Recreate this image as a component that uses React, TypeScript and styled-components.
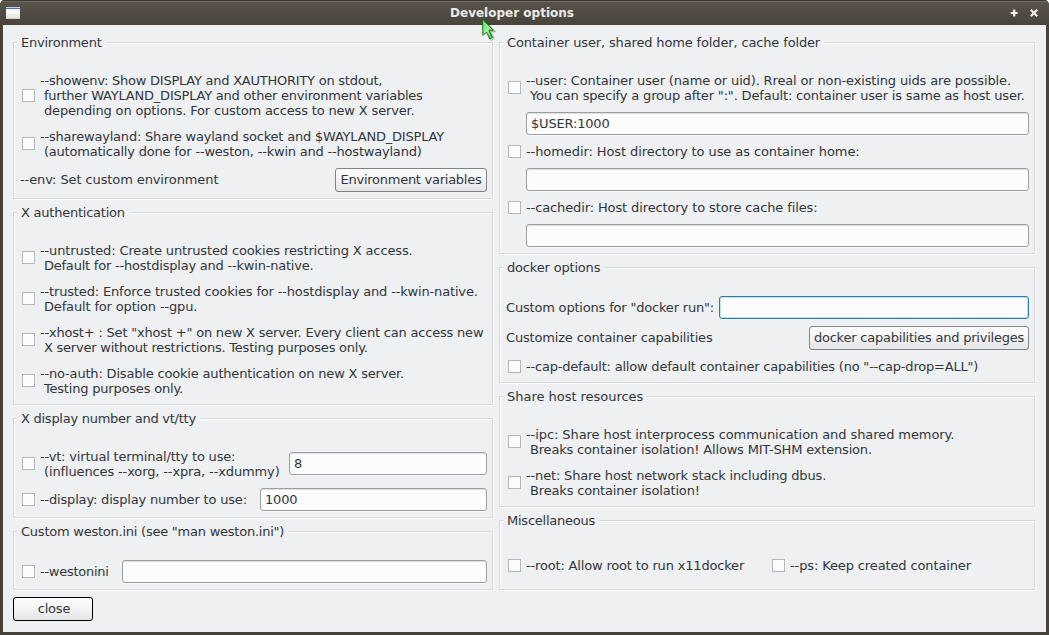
import React from "react";
import styled, { createGlobalStyle } from "styled-components";

const GlobalStyle = createGlobalStyle`
  *, *::before, *::after { box-sizing: border-box; }
  html, body { margin: 0; padding: 0; background: #fff; }
  body, input, button { font: 13px/15px "DejaVu Sans", Verdana, sans-serif; color: #31363b; }
`;

const Window = styled.div`
  position: relative;
  width: 1049px;
  height: 635px;
  display: flex;
  flex-direction: column;
  overflow: hidden;
  background: #474239;
  border-radius: 5px 5px 0 0;
`;

const TitleBar = styled.header`
  height: 25px;
  flex: none;
  display: flex;
  align-items: center;
  padding: 1px 11px 0 6px;
  color: #eceae6;
  background: linear-gradient(#5b554c, #47423a);
  box-shadow: inset 0 1px 0 #3c3730, inset 0 2px 0 #6f6a62;
`;

const Title = styled.h1`
  flex: 1;
  margin: 0;
  padding-right: 6px;
  text-align: center;
  font-size: 12px;
  font-weight: bold;
  line-height: 15px;
`;

const TitleButtons = styled.div`
  display: flex;
  gap: 12px;
`;

const Body = styled.main`
  flex: 1;
  margin: 0 3px 3px;
  padding: 17px 11px 0 10px;
  background: #eff0f1;
`;

const Columns = styled.div`
  display: grid;
  grid-template-columns: 480px 536px;
  column-gap: 6px;
`;

const Column = styled.div`
  display: flex;
  flex-direction: column;
  gap: 13px;
`;

const GroupFrame = styled.section<{ $height: number }>`
  height: ${(p) => p.$height}px;
  padding: 0 5px 0 8px;
  border: 1px solid #d6d8da;
  box-shadow: 1px 1px 0 #fff, inset 1px 1px 0 #fff;
`;

const Legend = styled.h2`
  width: max-content;
  height: 15px;
  margin: -8px 0 0 -5px;
  padding: 0 4px;
  background: #eff0f1;
  font-size: 13px;
  font-weight: normal;
  line-height: 15px;
`;

const Rows = styled.div<{ $top: number; $gap: number }>`
  display: flex;
  flex-direction: column;
  gap: ${(p) => p.$gap}px;
  padding-top: ${(p) => p.$top}px;
`;

const Row = styled.div<{ $height: number; $lift?: number }>`
  display: flex;
  align-items: center;
  height: ${(p) => p.$height}px;
  margin-top: ${(p) => -(p.$lift ?? 0)}px;
`;

const OptionPair = styled.div`
  display: grid;
  grid-template-columns: 264px 1fr;
`;

const OptionLabel = styled.label`
  display: flex;
  align-items: flex-start;
  gap: 5px;
`;

const CheckBox = styled.input.attrs({ type: "checkbox" })<{ $lines: number }>`
  appearance: none;
  flex: none;
  width: 13px;
  height: 13px;
  margin: ${(p) => Math.floor(p.$lines * 7.5 - 6.5)}px 0 0;
  border: 1px solid #b4b6b8;
  background: #fcfcfc;
`;

const Tracked = styled.span<{ $spacing: number }>`
  white-space: pre;
  letter-spacing: ${(p) => p.$spacing.toFixed(4)}px;
`;

const Line = styled.span`
  display: block;
  height: 15px;
`;

const Caption = styled.span`
  flex: 1;
  align-self: flex-start;
  min-width: 0;
  margin: 4px 0 0 -2px;
`;

const TextField = styled.input<{ $width: number; $focused?: boolean; $raised?: boolean }>`
  flex: none;
  width: ${(p) => p.$width}px;
  height: 23px;
  margin: 0 0 ${(p) => (p.$raised ? 1 : 0)}px auto;
  padding: 0 4px;
  outline: none;
  border: 1px solid ${(p) => (p.$focused ? "#2a7ca8" : "#9c9ea0")};
  border-radius: 3px;
  background: #fcfcfc;
  letter-spacing: -0.18px;
  box-shadow: ${(p) => (p.$focused ? "inset 0 0 0 1px #bfe0f0" : "inset 0 1px 0 #e0e1e3, 0 1px 0 #f8f8fa")};
`;

const PushButton = styled.button<{ $width: number; $default?: boolean }>`
  flex: none;
  width: ${(p) => p.$width}px;
  height: 24px;
  padding: 0 0 1px ${(p) => (p.$default ? 2 : 0)}px;
  border: 1px solid ${(p) => (p.$default ? "#000" : "#828486")};
  border-radius: 3px;
  background: linear-gradient(#fdfdfe, #f4f4f6 50%, #e3e4e6);
  white-space: nowrap;
`;

const Footer = styled.footer`
  padding-top: 7px;
`;

const Pointer = styled.svg`
  position: absolute;
  left: 481px;
  top: 18px;
`;

/* Text with the number of pixels by which its natural width is tightened. */
type Copy = [text: string, tighten: number];

function Text({ copy: [text, tighten] }: { copy: Copy }) {
  return <Tracked $spacing={-tighten / text.length}>{text}</Tracked>;
}

function Option({ lines }: { lines: Copy[] }) {
  return (
    <OptionLabel>
      <CheckBox $lines={lines.length} />
      <span>
        {lines.map((copy) => (
          <Line key={copy[0]}>
            <Text copy={copy} />
          </Line>
        ))}
      </span>
    </OptionLabel>
  );
}

function Group({ title, height, children }: { title: Copy; height: number; children: React.ReactNode }) {
  return (
    <GroupFrame $height={height}>
      <Legend>
        <Text copy={title} />
      </Legend>
      {children}
    </GroupFrame>
  );
}

export default function App() {
  return (
    <>
      <GlobalStyle />
      <Window>
        <TitleBar>
          <svg width="14" height="12" viewBox="0 0 14 12" shapeRendering="crispEdges">
            <rect width="14" height="12" fill="#e9eae6" />
            <rect width="14" height="1" fill="#c6d3e6" />
            <rect y="1" width="14" height="1" fill="#4a72b0" />
            <rect y="2" width="14" height="5" fill="#f8f8f8" />
            <rect y="11" width="14" height="1" fill="#d0d0c8" />
          </svg>
          <Title>Developer options</Title>
          <TitleButtons>
            <svg width="8" height="8" viewBox="0 0 8 8">
              <path d="M4.200 0.500v7M0.700 4h7" stroke="#f2f1ef" strokeWidth="2.200" />
            </svg>
            <svg width="8" height="8" viewBox="0 0 8 8">
              <path d="M0.800 0.800l6.400 6.400M7.200 0.800L0.800 7.200" stroke="#f2f1ef" strokeWidth="2.200" />
            </svg>
          </TitleButtons>
        </TitleBar>
        <Body>
          <Columns>
            <Column>
              <Group title={["Environment", 2.5]} height={157}>
                <Rows $top={23} $gap={11}>
                  <Option
                    lines={[
                      ["--showenv: Show DISPLAY and XAUTHORITY on stdout,", 11.8],
                      [" further WAYLAND_DISPLAY and other environment variables", 12],
                      [" depending on options. For custom access to new X server.", 9],
                    ]}
                  />
                  <Option
                    lines={[
                      ["--sharewayland: Share wayland socket and $WAYLAND_DISPLAY", 11.5],
                      [" (automatically done for --weston, --kwin and --hostwayland)", 12.3],
                    ]}
                  />
                  <Row $height={24} $lift={2}>
                    <Caption>
                      <Text copy={["--env: Set custom environment", 3]} />
                    </Caption>
                    <PushButton $width={152}>
                      <Text copy={["Environment variables", 5.5]} />
                    </PushButton>
                  </Row>
                </Rows>
              </Group>
              <Group title={["X authentication", 3.8]} height={193}>
                <Rows $top={23} $gap={11}>
                  <Option
                    lines={[
                      ["--untrusted: Create untrusted cookies restricting X access.", 7.8],
                      [" Default for --hostdisplay and --kwin-native.", 9.5],
                    ]}
                  />
                  <Option
                    lines={[
                      ["--trusted: Enforce trusted cookies for --hostdisplay and --kwin-native.", 11.5],
                      [" Default for option --gpu.", 4],
                    ]}
                  />
                  <Option
                    lines={[
                      ['--xhost+ : Set "xhost +" on new X server. Every client can access new', 13.5],
                      [" X server without restrictions. Testing purposes only.", 12],
                    ]}
                  />
                  <Option
                    lines={[
                      ["--no-auth: Disable cookie authentication on new X server.", 10.3],
                      [" Testing purposes only.", 4.5],
                    ]}
                  />
                </Rows>
              </Group>
              <Group title={["X display number and vt/tty", 7]} height={100}>
                <Rows $top={23} $gap={9}>
                  <Row $height={30}>
                    <Option
                      lines={[
                        ["--vt: virtual terminal/tty to use:", 6],
                        [" (influences --xorg, --xpra, --xdummy)", 5],
                      ]}
                    />
                    <TextField $width={198} $raised defaultValue="8" />
                  </Row>
                  <Row $height={23}>
                    <Option lines={[["--display: display number to use:", 6]]} />
                    <TextField $width={227} defaultValue="1000" />
                  </Row>
                </Rows>
              </Group>
              <Group title={['Custom weston.ini (see "man weston.ini")', 9.5]} height={59}>
                <Rows $top={21} $gap={0}>
                  <Row $height={23}>
                    <Option lines={[["--westonini", 3]]} />
                    <TextField $width={365} />
                  </Row>
                </Rows>
              </Group>
            </Column>
            <Column>
              <Group title={["Container user, shared home folder, cache folder", 7]} height={212}>
                <Rows $top={23} $gap={9}>
                  <Option
                    lines={[
                      ["--user: Container user (name or uid). Rreal or non-existing uids are possible.", 11.3],
                      [' You can specify a group after ":". Default: container user is same as host user.', 13.5],
                    ]}
                  />
                  <TextField $width={503} defaultValue="$USER:1000" />
                  <Option lines={[["--homedir: Host directory to use as container home:", 4.3]]} />
                  <TextField $width={503} />
                  <Option lines={[["--cachedir: Host directory to store cache files:", 5.7]]} />
                  <TextField $width={503} />
                </Rows>
              </Group>
              <Group title={["docker options", 2.5]} height={116}>
                <Rows $top={21} $gap={7}>
                  <Row $height={23}>
                    <Caption>
                      <Text copy={['Custom options for "docker run":', 6]} />
                    </Caption>
                    <TextField $width={310} $focused />
                  </Row>
                  <Row $height={24}>
                    <Caption>
                      <Text copy={["Customize container capabilities", 5.5]} />
                    </Caption>
                    <PushButton $width={220}>
                      <Text copy={["docker capabilities and privileges", 7.5]} />
                    </PushButton>
                  </Row>
                  <Row $height={19}>
                    <Option
                      lines={[['--cap-default: allow default container capabilities (no "--cap-drop=ALL")', 14.7]]}
                    />
                  </Row>
                </Rows>
              </Group>
              <Group title={["Share host resources", 0.5]} height={111}>
                <Rows $top={23} $gap={11}>
                  <Option
                    lines={[
                      ["--ipc: Share host interprocess communication and shared memory.", 5],
                      [" Breaks container isolation! Allows MIT-SHM extension.", 9.5],
                    ]}
                  />
                  <Option
                    lines={[
                      ["--net: Share host network stack including dbus.", 7.5],
                      [" Breaks container isolation!", 4.5],
                    ]}
                  />
                </Rows>
              </Group>
              <Group title={["Miscellaneous", 3]} height={70}>
                <Rows $top={30} $gap={0}>
                  <OptionPair>
                    <Option lines={[["--root: Allow root to run x11docker", 6]]} />
                    <Option lines={[["--ps: Keep created container", 3.5]]} />
                  </OptionPair>
                </Rows>
              </Group>
            </Column>
          </Columns>
          <Footer>
            <PushButton $width={80} $default>
              <Text copy={["close", 1]} />
            </PushButton>
          </Footer>
        </Body>
        <Pointer width="16" height="24" viewBox="0 0 16 24">
          <defs>
            <linearGradient id="pointerFill" x1="0" y1="0" x2="1" y2="1">
              <stop offset="0" stopColor="#5fd65c" />
              <stop offset="0.5" stopColor="#a4f29c" />
              <stop offset="1" stopColor="#2fb038" />
            </linearGradient>
          </defs>
          <path d="M2.500 2L14 13.500H9.500L12.700 20.500L10 22.500" fill="none" stroke="#000" strokeOpacity="0.25" strokeWidth="1.500" />
          <path d="M1.500 1L12.300 12.300H8L11.300 19.300L8.900 21.200L5.700 14.300L1.900 17.300Z" fill="url(#pointerFill)" stroke="#0f7a18" />
        </Pointer>
      </Window>
    </>
  );
}
